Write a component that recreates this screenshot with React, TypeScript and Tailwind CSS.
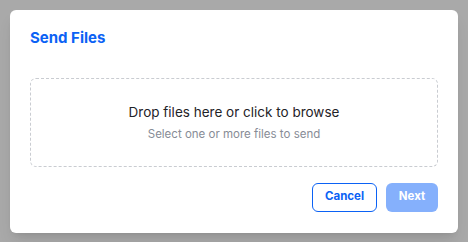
export default function App() {
  return (
    <div
      className="flex h-[242px] w-[468px] items-center justify-center bg-[#a9a9a9]"
      style={{ fontFamily: "Inter, 'Noto Sans', sans-serif" }}
    >
      <div className="w-[448px] rounded-md bg-white px-5 pt-5 pb-[21px] shadow-lg">
        <h2 className="mb-8 text-[15px] leading-4 font-bold text-[#0b62f5]">
          Send Files
        </h2>

        {/* Drop zone */}
        <div className="flex h-[89px] cursor-pointer flex-col items-center justify-center rounded-md border border-dashed border-[#c9ccd1]">
          <p className="text-[13.5px] leading-5 text-[#1f2328]">
            Drop files here or click to browse
          </p>
          <p className="mt-1 text-[11.5px] leading-4 text-[#878c96]">
            Select one or more files to send
          </p>
        </div>

        <div className="mt-4 flex justify-end gap-[9px]">
          <button className="h-[29px] w-[65px] rounded-md border border-[#0b62f5] bg-white text-[11.5px] font-bold text-[#0b62f5]">
            Cancel
          </button>
          <button
            disabled
            className="h-[29px] w-[52px] rounded-md bg-[#85b0fc] text-[11.5px] font-bold text-white"
          >
            Next
          </button>
        </div>
      </div>
    </div>
  );
}
